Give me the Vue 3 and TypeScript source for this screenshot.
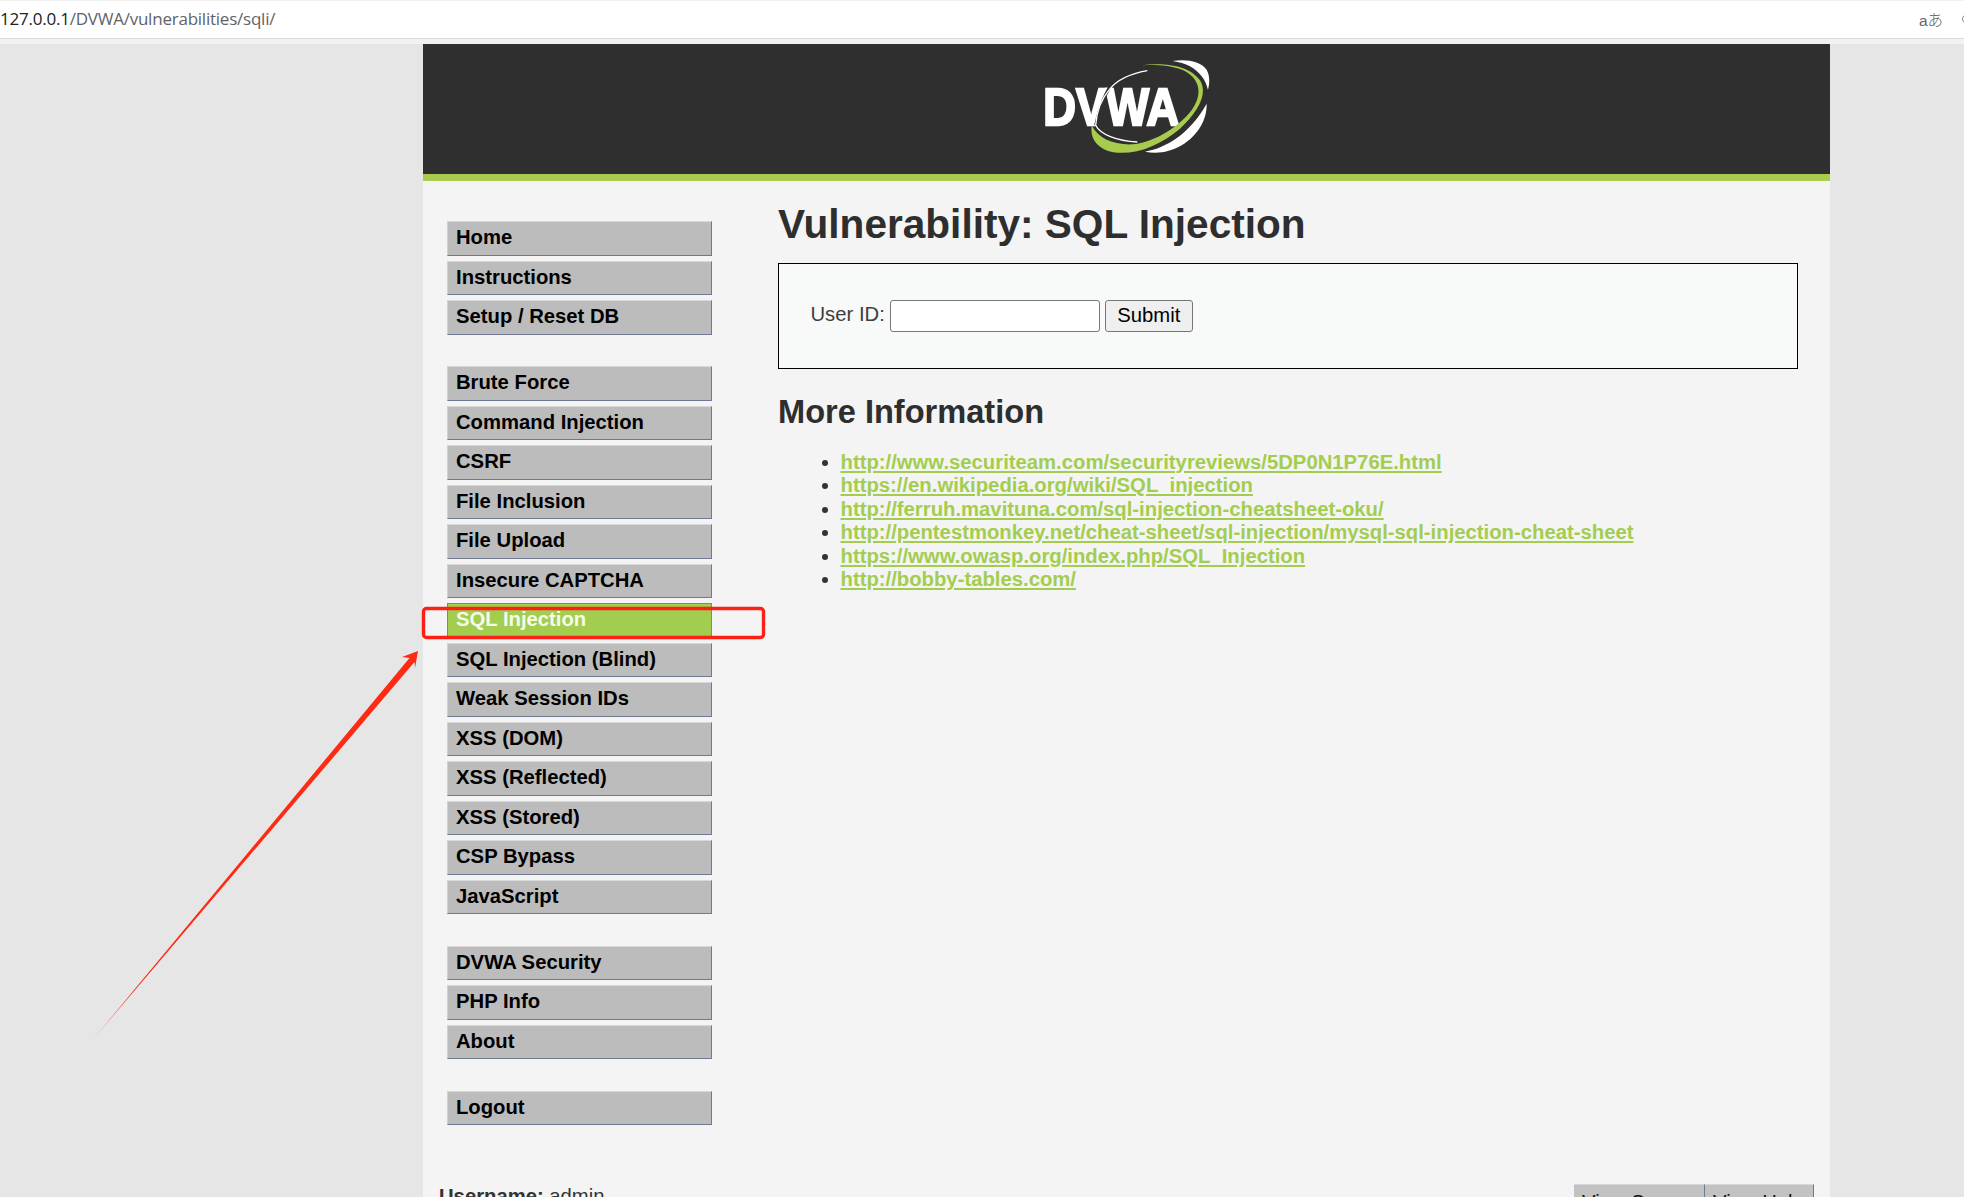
<script setup lang="ts">
const menuGroups: string[][] = [
  ['Home', 'Instructions', 'Setup / Reset DB'],
  ['Brute Force', 'Command Injection', 'CSRF', 'File Inclusion', 'File Upload', 'Insecure CAPTCHA', 'SQL Injection', 'SQL Injection (Blind)', 'Weak Session IDs', 'XSS (DOM)', 'XSS (Reflected)', 'XSS (Stored)', 'CSP Bypass', 'JavaScript'],
  ['DVWA Security', 'PHP Info', 'About'],
  ['Logout'],
]
const links: string[] = [
  'http://www.securiteam.com/securityreviews/5DP0N1P76E.html',
  'https://en.wikipedia.org/wiki/SQL_injection',
  'http://ferruh.mavituna.com/sql-injection-cheatsheet-oku/',
  'http://pentestmonkey.net/cheat-sheet/sql-injection/mysql-sql-injection-cheat-sheet',
  'https://www.owasp.org/index.php/SQL_Injection',
  'http://bobby-tables.com/',
]
</script>

<template>
  <div class="screen">
    <div class="addressbar">
      <span class="url"><span class="host">127.0.0.1</span>/DVWA/vulnerabilities/sqli/</span>
      <span class="translate">aあ</span>
    </div>
    <div class="strip"></div>
    <div class="page">
      <header class="header">
        <svg class="logo" viewBox="270 80 520 295" aria-label="DVWA logo">
          <defs>
            <filter id="soft" x="-5%" y="-5%" width="110%" height="110%"><feGaussianBlur stdDeviation="1.6" /></filter>
          </defs>
          <g filter="url(#soft)">
            <text x="280" y="283" class="logo-text" textLength="408" lengthAdjust="spacingAndGlyphs">DVWA</text>
            <path d="M490 155 C470 180 448 230 437 285" fill="none" stroke="#2f2f2f" stroke-width="9" />
            <path d="M592 121 C540 130 500 150 478 178 C455 205 440 245 437 285 C450 312 500 332 562 335" fill="none" stroke="#fff" stroke-width="4" />
            <path d="M575 105 C640 95 720 105 750 150 C775 190 745 245 690 295 C630 345 560 375 490 366 C440 355 420 325 425 285 C445 325 490 345 550 342 C620 335 690 285 725 240 C760 190 750 145 700 120 C660 105 620 103 575 105 Z" fill="#a8cb4e" />
            <path d="M668 92 C710 86 750 92 770 118 C782 140 778 165 774 178 C768 150 750 125 720 108 C705 100 688 95 668 92 Z" fill="#fff" />
            <path d="M585 364 C650 352 720 310 770 220 C772 265 745 315 695 345 C660 366 620 372 585 364 Z" fill="#fff" />
          </g>
        </svg>
      </header>
      <div class="accent"></div>
      <main class="main">
        <nav class="menu">
          <ul v-for="(group, g) in menuGroups" :key="g" class="menu-group">
            <li v-for="item in group" :key="item" class="menu-item" :class="{ selected: item === 'SQL Injection' }">{{ item }}</li>
          </ul>
        </nav>
        <section class="content">
          <h1>Vulnerability: SQL Injection</h1>
          <div class="vulnerable">
            <form class="userform" @submit.prevent>
              <label class="userlabel" for="uid">User ID:</label>
              <input id="uid" class="userinput" type="text" />
              <button class="submit" type="submit">Submit</button>
            </form>
          </div>
          <h2>More Information</h2>
          <ul class="links">
            <li v-for="link in links" :key="link"><a :href="link" @click.prevent>{{ link }}</a></li>
          </ul>
        </section>
      </main>
      <footer class="footer">
        <div class="status"><b>Username:</b> admin</div>
        <div class="view-buttons">
          <span class="view">View Source</span>
          <span class="view">View Help</span>
        </div>
      </footer>
    </div>

    <span class="edge-icon"></span>
    <svg class="annotation" viewBox="0 0 1964 1197" aria-hidden="true">
      <defs>
        <linearGradient id="tail" gradientUnits="userSpaceOnUse" x1="90" y1="1043" x2="135" y2="989">
          <stop offset="0" stop-color="#ff2a14" stop-opacity="0.3" />
          <stop offset="1" stop-color="#ff2a14" />
        </linearGradient>
      </defs>
      <rect x="423.5" y="608.5" width="340" height="29" rx="3" fill="none" stroke="#fe2015" stroke-width="3.4" />
      <polygon points="90,1043 409.5,658 402,657 418,651 415,668 414.5,662" fill="url(#tail)" />
    </svg>
  </div>
</template>

<style scoped>
.screen {
  position: relative;
  width: 1964px;
  height: 1197px;
  overflow: hidden;
  background: #e6e6e6;
  font-family: "Liberation Sans", Arial, sans-serif;
}
.addressbar {
  height: 37px;
  display: flex;
  align-items: center;
  justify-content: space-between;
  background: #fff;
  border-top: 1px solid #f2f2f2;
  border-bottom: 1px solid #dcdcdc;
}
.url {
  font-family: "Open Sans", sans-serif;
  font-size: 17px;
  letter-spacing: -0.23px;
  color: #5f6368;
  white-space: nowrap;
  margin-top: -2px;
}
.host { color: #202124; }
.translate {
  font-family: "Liberation Sans", "Noto Sans CJK JP", sans-serif;
  font-size: 15.5px;
  font-weight: 300;
  color: #666;
  margin-right: 21px;
  margin-top: -2px;
}
.edge-icon {
  position: absolute;
  left: 1962px;
  top: 14px;
  width: 10px;
  height: 10px;
  box-sizing: border-box;
  border: 1.5px solid #888;
  border-radius: 50%;
}
.strip { height: 5px; background: #f1f1f1; }
.page {
  width: 1407px;
  margin-left: 423px;
  background: #f4f4f4;
  height: 1153px;
}
.header {
  height: 130px;
  background: #2f2f2f;
  display: flex;
  justify-content: center;
  align-items: flex-start;
}
.logo {
  width: 173.3px;
  height: 98.3px;
  margin-top: 12.7px;
}
.logo-text {
  font-family: "Liberation Sans", Arial, sans-serif;
  font-weight: 700;
  font-size: 156px;
  fill: #fff;
  stroke: #fff;
  stroke-width: 7px;
}
.accent { height: 7px; background: #a9cb4e; }
.main {
  display: grid;
  grid-template-columns: 355px 1fr;
}
.menu { padding: 40px 0 0 24px; }
.menu-group {
  list-style: none;
  margin: 0;
  padding: 0 0 31.5px;
  width: 265px;
  display: flex;
  flex-direction: column;
  gap: 5px;
}
.menu-group:last-child { padding-bottom: 0; }
.menu-item {
  box-sizing: border-box;
  height: 34.5px;
  padding-left: 8px;
  line-height: 31px;
  font-size: 20.25px;
  font-weight: 700;
  color: #000;
  background: #bcbcbc;
  border-style: solid;
  border-width: 1.5px 1px 1.5px 1px;
  border-color: #d8d8d8 #6f7a90 #6f7a90 #d0d0d0;
  white-space: nowrap;
}
.menu-item.selected {
  background: #a3cd4f;
  color: #f6fbe9;
  border-color: #7d8b68 #7f8b76 #7f8b76 #7d8b68;
}
.content { padding-right: 32px; }
h1 {
  margin: 20px 0 0;
  font-size: 40.6px;
  line-height: 46px;
  font-weight: 700;
  color: #2e2e2e;
}
.vulnerable {
  box-sizing: border-box;
  height: 105.5px;
  margin-top: 16px;
  border: 1.5px solid #000;
  background: #f8f9f9;
}
.userform {
  display: flex;
  align-items: flex-start;
  padding: 35.5px 0 0 31.5px;
}
.userlabel {
  font-size: 20.25px;
  line-height: 29px;
  color: #3e3e3e;
  margin-right: 5px;
}
.userinput {
  box-sizing: border-box;
  width: 210px;
  height: 32px;
  padding: 0;
  background: #fff;
  border: 1.5px solid #767676;
  border-radius: 3px;
}
.submit {
  box-sizing: border-box;
  width: 88px;
  height: 32px;
  margin-left: 5px;
  padding: 0;
  font-family: "Liberation Sans", Arial, sans-serif;
  font-size: 20.25px;
  color: #000;
  background: #efefef;
  border: 1.5px solid #767676;
  border-radius: 3px;
}
h2 {
  margin: 23px 0 0;
  font-size: 32.6px;
  line-height: 40px;
  font-weight: 700;
  color: #2e2e2e;
}
.links {
  margin: 19px 0 0;
  padding-left: 62.5px;
  font-size: 20.3px;
  line-height: 23.5px;
  color: #333;
}
.links a {
  color: #a3cd4f;
  font-weight: 700;
}
.footer {
  display: flex;
  justify-content: space-between;
  align-items: flex-start;
  padding: 0 16px;
  margin-top: 59px;
}
.status {
  font-size: 20.25px;
  line-height: 24px;
  color: #333;
}
.view-buttons { display: flex; }
.view {
  box-sizing: border-box;
  height: 34.5px;
  padding: 6px 0 0 8px;
  font-size: 20.25px;
  color: #111;
  background: #c2c2c2;
  border-top: 1.5px solid #d8d8d8;
  border-right: 1.5px solid #6f7a90;
}
.view:first-child { width: 131px; }
.view:last-child { width: 109px; }
.annotation {
  position: absolute;
  left: 0;
  top: 0;
  width: 1964px;
  height: 1197px;
  pointer-events: none;
}
</style>
